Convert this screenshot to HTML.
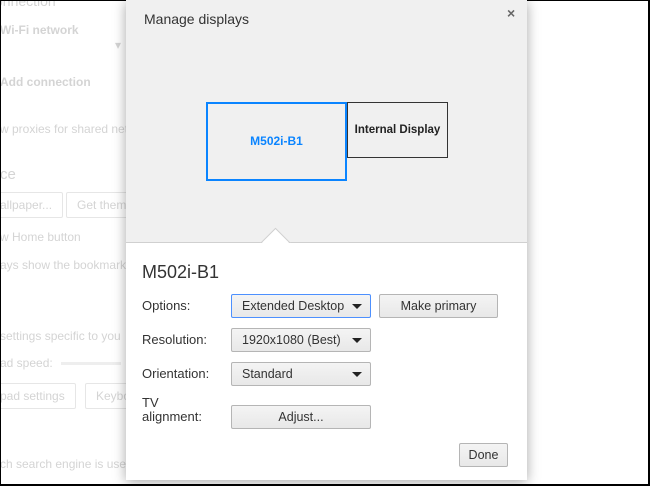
<!DOCTYPE html>
<html><head><style>
*{box-sizing:border-box;margin:0;padding:0}
body{width:650px;height:486px;background:#000;position:relative;overflow:hidden;font-family:"Liberation Sans",sans-serif}
#frame{position:absolute;left:1px;top:1px;width:647px;height:483px;background:#fff;overflow:hidden}
.bg{position:absolute;color:#d4d4d4;font-size:12px;white-space:nowrap}
.bgb{position:absolute;border:1px solid #e6e6e6;border-radius:2px;color:#d4d4d4;font-size:12px;padding:5px 10px;white-space:nowrap}
#dlg{position:absolute;left:126px;top:0;width:401px;height:480px;background:#fff;box-shadow:0 2px 12px rgba(0,0,0,.35)}
#head{position:absolute;left:0;top:0;width:401px;height:243px;background:#f0f0f0;border-bottom:1px solid #d0d0d0}
.t{position:absolute;color:#333;font-size:13px;white-space:nowrap}
.sel,.btn{position:absolute;height:24px;border:1px solid #b5b5b5;border-radius:2px;background:linear-gradient(#f4f4f4,#e8e8e8);font-size:12.5px;color:#333;line-height:22px}
.sel{padding-left:10px}
.sel:after{content:"";position:absolute;right:8px;top:9px;border-left:5px solid transparent;border-right:5px solid transparent;border-top:5px solid #222}
.btn{text-align:center}
</style></head><body>
<div id="frame">
<div class="bg" style="left:-6px;top:-8px;font-size:14px">onnection</div>
<div class="bg" style="left:-1px;top:22px;font-weight:bold">Wi-Fi network</div>
<div class="bg" style="left:114px;top:37px">▾</div>
<div class="bg" style="left:-1px;top:74px;font-weight:bold">Add connection</div>
<div class="bg" style="left:-1px;top:121px">w proxies for shared net</div>
<div class="bg" style="left:-1px;top:165px;font-size:15px">ce</div>
<div class="bgb" style="left:-12px;top:191px">allpaper...</div>
<div class="bgb" style="left:65px;top:191px">Get theme</div>
<div class="bg" style="left:-1px;top:229px">w Home button</div>
<div class="bg" style="left:-1px;top:257px">ays show the bookmark</div>
<div class="bg" style="left:-1px;top:328px">settings specific to you</div>
<div class="bg" style="left:-1px;top:355px">ad speed:</div>
<div style="position:absolute;left:60px;top:361px;width:60px;height:3px;background:#eee"></div>
<div class="bgb" style="left:-12px;top:382px">pad settings</div>
<div class="bgb" style="left:84px;top:382px">Keybo</div>
<div class="bg" style="left:-1px;top:456px">ch search engine is used</div>
</div>
<div id="dlg">
<div id="head">
<div class="t" style="left:18px;top:11px;font-size:14px">Manage displays</div>
<div class="t" style="left:381px;top:5px;font-size:14px;color:#666;font-weight:bold">×</div>
<div style="position:absolute;left:80px;top:102px;width:141px;height:79px;border:2px solid #0a84ff;color:#0a84ff;font-weight:bold;font-size:12px;text-align:center;line-height:75px">M502i-B1</div>
<div style="position:absolute;left:221px;top:102px;width:101px;height:56px;border:1px solid #333;color:#222;font-weight:bold;font-size:11.5px;text-align:center;line-height:54px">Internal Display</div>
</div>
<div style="position:absolute;left:134px;top:227px;width:32px;height:16px;overflow:hidden">
<div style="position:absolute;left:5px;top:5px;width:21px;height:21px;background:#fff;border:1px solid #d0d0d0;transform:rotate(45deg)"></div>
</div>
<div class="t" style="left:16px;top:262px;font-size:18px">M502i-B1</div>
<div class="t" style="left:16px;top:298px">Options:</div>
<div class="sel" style="left:105px;top:294px;width:140px;border-color:#4d90fe">Extended Desktop</div>
<div class="btn" style="left:253px;top:294px;width:119px">Make primary</div>
<div class="t" style="left:16px;top:332px">Resolution:</div>
<div class="sel" style="left:105px;top:328px;width:140px">1920x1080 (Best)</div>
<div class="t" style="left:16px;top:366px">Orientation:</div>
<div class="sel" style="left:105px;top:362px;width:140px">Standard</div>
<div class="t" style="left:16px;top:396px;line-height:14px">TV<br>alignment:</div>
<div class="btn" style="left:105px;top:405px;width:140px">Adjust...</div>
<div class="btn" style="left:333px;top:443px;width:49px">Done</div>
</div>
</body></html>
